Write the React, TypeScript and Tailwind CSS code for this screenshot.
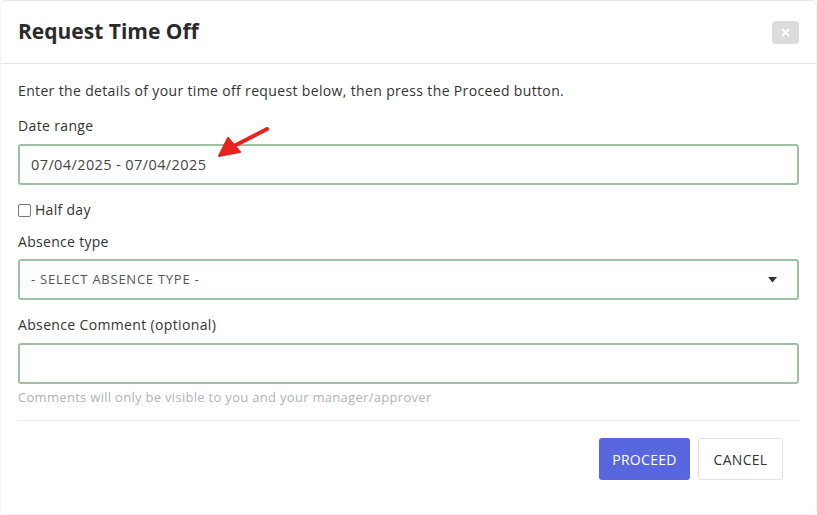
import { useState } from "react";

const font = { fontFamily: "'Open Sans', 'Liberation Sans', sans-serif" };

function ArrowMark() {
  // red annotation arrow pointing at the date field
  return (
    <svg className="absolute left-[214px] top-[124px]" width="60" height="36" viewBox="0 0 60 36">
      <path d="M53 5 L16 24" stroke="#e8231f" strokeWidth="4" strokeLinecap="round" />
      <path d="M5 32 L14 14 L26 28 Z" fill="#e8231f" stroke="#e8231f" strokeWidth="2" strokeLinejoin="round" />
    </svg>
  );
}

export default function App() {
  const [halfDay, setHalfDay] = useState(false);

  return (
    <div className="w-[817px] h-[515px] bg-white text-[#333] relative" style={font}>
      <div className="h-full border border-[#f3f3f6] border-t-[#e5e5ea] rounded-md flex flex-col">
        {/* Header */}
        <div className="h-[63px] flex items-center justify-between px-[17px] border-b border-[#e6e6ea]">
          <h1 className="text-[21px] font-bold text-[#2b2b2b] tracking-[0px]">Request Time Off</h1>
          <button className="w-[27px] h-[23px] rounded bg-[#dcdcdc] text-white flex items-center justify-center">
            <svg width="9" height="9" viewBox="0 0 9 9">
              <path d="M1.5 1.5 L7.5 7.5 M7.5 1.5 L1.5 7.5" stroke="white" strokeWidth="2" strokeLinecap="round" />
            </svg>
          </button>
        </div>

        {/* Body */}
        <div className="px-[17px] pt-[17px] flex flex-col">
          <p className="text-[14px] leading-[20px] text-[#333] tracking-[0.35px]">
            Enter the details of your time off request below, then press the Proceed button.
          </p>

          <label className="mt-[15px] text-[14px] leading-[20px] text-[#333] tracking-[0.35px]">Date range</label>
          <div className="mt-[8px] h-[41px] border-2 border-[#9cc2a2] rounded-[3px] flex items-center px-[11px] text-[14.5px] text-[#444] tracking-[0.4px]">
            07/04/2025 - 07/04/2025
          </div>

          <label className="mt-[15px] flex items-center gap-[4px] text-[14px] leading-[20px] text-[#333] tracking-[0.3px]">
            <span
              onClick={() => setHalfDay(!halfDay)}
              className="w-[13px] h-[13px] border-[1.5px] border-[#777] rounded-[2px] bg-white"
            />
            Half day
          </label>

          <label className="mt-[12px] text-[14px] leading-[20px] text-[#333] tracking-[0.3px]">Absence type</label>
          <div className="mt-[7px] h-[41px] border-2 border-[#9cc2a2] rounded-[3px] flex items-center justify-between pl-[11px] pr-[20px] text-[13px] text-[#555] tracking-[0.75px]">
            <span>- SELECT ABSENCE TYPE -</span>
            <svg width="9" height="6" viewBox="0 0 9 6">
              <path d="M0 0 L9 0 L4.5 5.5 Z" fill="#333" />
            </svg>
          </div>

          <label className="mt-[15px] text-[14px] leading-[20px] text-[#333] tracking-[0.35px]">Absence Comment (optional)</label>
          <div className="mt-[8px] h-[41px] border-2 border-[#9cc2a2] rounded-[3px]" />
          <p className="mt-[5px] text-[13px] leading-[16px] text-[#b3b3b3] tracking-[0.3px]">
            Comments will only be visible to you and your manager/approver
          </p>

          <div className="mt-[15px] border-t border-[#e8e8ec]" />

          <div className="mt-[17px] flex justify-end gap-[8px] pr-[16px]">
            <button className="h-[42px] w-[91px] rounded-[3px] bg-[#5867dd] text-white text-[14px] tracking-[0.3px]">PROCEED</button>
            <button className="h-[42px] w-[85px] rounded-[3px] bg-white border border-[#e0e0ea] text-[#333] text-[14px] tracking-[0.3px]">
              CANCEL
            </button>
          </div>
        </div>
      </div>
      <ArrowMark />
    </div>
  );
}
